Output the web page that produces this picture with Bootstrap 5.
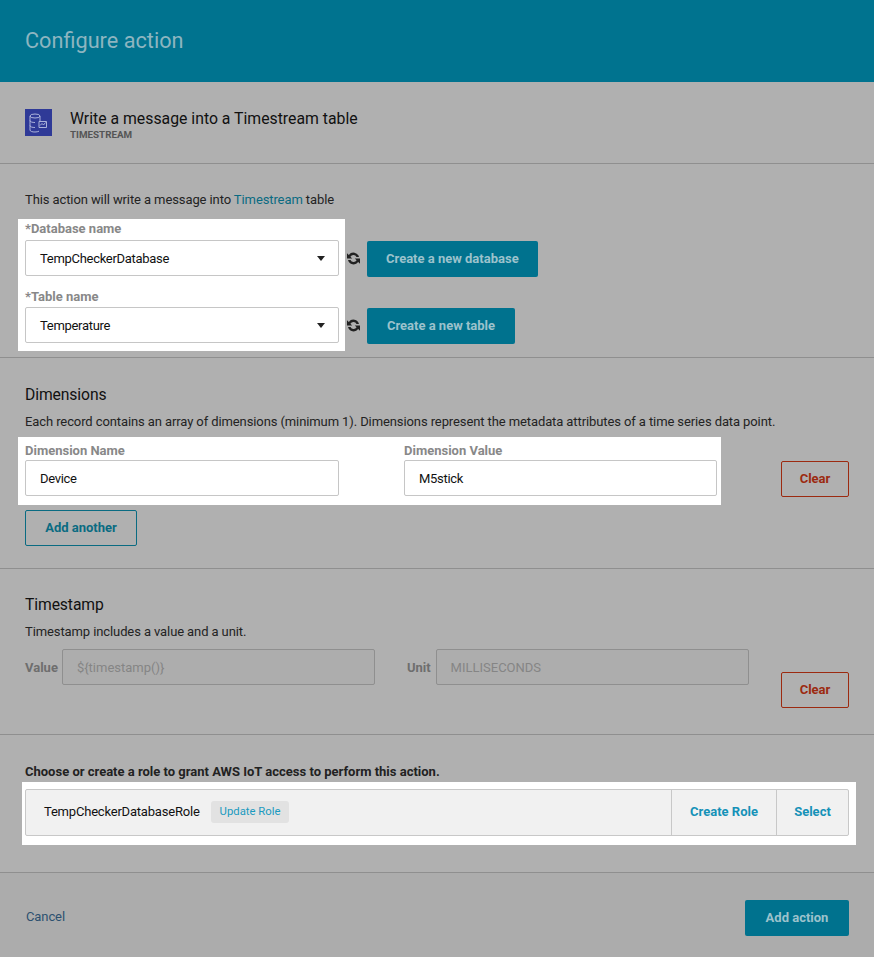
<!DOCTYPE html>
<html lang="en"><head><meta charset="utf-8"><title>Configure action</title>
<link rel="stylesheet" href="https://cdn.jsdelivr.net/npm/bootstrap@5.3.0/dist/css/bootstrap.min.css">
<style>
body{background:#b0b0b0;font-family:Roboto,"Liberation Sans",sans-serif;font-size:13px;line-height:18px;color:#232323;width:874px;height:957px;overflow:hidden;letter-spacing:-.1px}
.hdr{background:#00738f;height:82px;padding:0 25px;display:flex;align-items:center;font-size:21.7px;color:#8db5c0;letter-spacing:0}
.sect{border-bottom:1px solid #8f8f8f;padding:0 25px}
.s1{height:82px;display:flex;padding-top:27px;gap:18px}
.s2{height:194px;padding-top:27px}
.s3{height:211px;padding-top:27px}
.s4{height:166px;padding-top:26px}
.s5{height:138px;padding-top:28px}
.ftr{background:#acacac;height:84px;padding:27px 25px 0;display:flex;justify-content:space-between}
.ttl{font-size:15.8px;line-height:20px;color:#111;letter-spacing:0}
.subt{font-size:9.8px;line-height:12px;font-weight:700;color:#555;letter-spacing:0}
.ico{width:27px;height:27px;flex:none}
.tlnk{color:#0a6b82;text-decoration:none}
.hl{background:#fff;margin:0 -7px;padding:0 7px}
.hl1{width:327px;padding-top:1px;padding-bottom:8px;margin-top:10px}
.fld{color:#888;font-weight:700;line-height:18px;letter-spacing:0}
.inp{height:36px;width:314px;background:#fff;border:1px solid #c6c6c6;border-radius:2px;padding:1px 14px 0;display:flex;align-items:center;justify-content:space-between;color:#111;letter-spacing:-.3px}
.inpn{width:313px}
.caret{width:0;height:0;border:4.5px solid transparent;border-top:5px solid #222;border-bottom:0;margin-right:-1px;margin-top:-1px}
.rcol{position:absolute;left:322px;display:flex;align-items:center;gap:7px;height:36px}
.filled{background:#00728e;color:#9cc2cc;font-weight:700;border-radius:2px;height:36px;padding:0 19px;display:inline-flex;align-items:center;border:0;font-size:13px;letter-spacing:0}
.wide{width:148px;justify-content:center;padding:0}
.s2box{position:relative}
.hd2{font-size:15.7px;line-height:20px;color:#111}
.desc{margin-top:8px}
.hl2{display:flex;gap:65px;width:703px;height:68px;margin-top:6px;padding-top:5px}
.dimrow{display:flex;position:relative}
.ghost{background:transparent;height:36px;border:1px solid;border-radius:2px;font-weight:700;font-size:13px;display:inline-flex;align-items:center;justify-content:center;letter-spacing:0}
.gclear{color:#9c2a10;border-color:#9c2a10;width:68px;position:absolute;right:0}
.gadd{color:#0a6b82;border-color:#0a6b82;width:112px;margin-top:5px}
.tsrow{display:flex;position:relative;margin-top:8px;height:36px;align-items:center}
.tslab{color:#6e6e6e;font-weight:700;margin-right:4px;letter-spacing:0;padding-top:1px}
.dis{height:36px;width:313px;border:1px solid #8f8f8f;border-radius:2px;padding:1px 14px 0;display:flex;align-items:center;color:#858585;background:#adadad;letter-spacing:0}
.bold2{font-weight:700;color:#222;letter-spacing:0}
.hl3{margin-top:1px;width:834px;margin-left:-3px;margin-right:0;padding:7px 7px 9px 3px;height:63px}
.rolebar{display:flex;height:47px;background:#f1f1f1;border:1px solid #c8c8c8;border-radius:2px;align-items:stretch}
.rname{flex:1;display:flex;align-items:center;padding-left:18px;gap:11px;color:#111;letter-spacing:-.2px;padding-bottom:1px}
.pill{background:#e2e2e2;color:#1a9ac0;border-radius:3px;padding:0 9px;height:22px;display:flex;align-items:center;font-size:11.3px;letter-spacing:0}
.rbtn{border-left:1px solid #c8c8c8;color:#1592b8;font-weight:700;display:flex;align-items:center;justify-content:center;letter-spacing:0;padding-bottom:1px}
.cancel{color:#2c5170;text-decoration:none;margin-top:8px;margin-left:1px;display:block}
</style></head>
<body>
<div class="hdr">Configure action</div>
<div class="sect s1">
 <svg class="ico" viewBox="0 0 27 27" fill="none" stroke="#b9c0e2" stroke-width=".9"><rect width="27" height="27" fill="#2f3a97" stroke="none"/><ellipse cx="10" cy="7" rx="5" ry="2"/><path d="M5 7V21C5 22.500 7.500 23 10 23C11.500 23 13 22.700 14 22.200M15 7V12M5 11.500C5 13 7.500 13.500 10 13.500M5 16.500C5 18 7.500 18.500 10 18.500"/><path d="M14 12.500h7.500v6H14zM15 16.500l2-2 1.500 1.500 2-2.500"/></svg>
 <div><div class="ttl">Write a message into a Timestream table</div><div class="subt">TIMESTREAM</div></div>
</div>
<div class="sect s2">
 <div>This action will write a message into <a class="tlnk" href="#">Timestream</a> table</div>
 <div class="s2box">
  <div class="hl hl1">
   <div class="fld">*Database name</div>
   <div class="inp" style="margin-top:2px"><span>TempCheckerDatabase</span><span class="caret"></span></div>
   <div class="fld" style="margin-top:12px">*Table name</div>
   <div class="inp" style="margin-top:1px"><span>Temperature</span><span class="caret"></span></div>
  </div>
  <div class="rcol" style="top:21px"><svg width="13" height="13" viewBox="1.500 1.500 13 13"><path d="M13.500 6.500A5.700 5.700 0 0 0 3.300 4.500L1.500 2.800V8h5.200L4.900 6.200A3.400 3.400 0 0 1 11 6.500zM2.500 9.500A5.700 5.700 0 0 0 12.700 11.500L14.500 13.200V8H9.300L11.100 9.800A3.400 3.400 0 0 1 5 9.500z" fill="#222"/></svg><button class="filled" style="margin-top:2px">Create a new database</button></div>
  <div class="rcol" style="top:88px"><svg width="13" height="13" viewBox="1.500 1.500 13 13"><path d="M13.500 6.500A5.700 5.700 0 0 0 3.300 4.500L1.500 2.800V8h5.200L4.900 6.200A3.400 3.400 0 0 1 11 6.500zM2.500 9.500A5.700 5.700 0 0 0 12.700 11.500L14.500 13.200V8H9.300L11.100 9.800A3.400 3.400 0 0 1 5 9.500z" fill="#222"/></svg><button class="filled wide" style="margin-top:2px">Create a new table</button></div>
 </div>
</div>
<div class="sect s3">
 <div class="hd2">Dimensions</div>
 <div class="desc">Each record contains an array of dimensions (minimum 1). Dimensions represent the metadata attributes of a time series data point.</div>
 <div class="dimrow">
  <div class="hl hl2">
   <div><div class="fld">Dimension Name</div><div class="inp">Device</div></div>
   <div><div class="fld">Dimension Value</div><div class="inp inpn">M5stick</div></div>
  </div>
  <button class="ghost gclear" style="top:30px">Clear</button>
 </div>
 <button class="ghost gadd">Add another</button>
</div>
<div class="sect s4">
 <div class="hd2">Timestamp</div>
 <div class="desc">Timestamp includes a value and a unit.</div>
 <div class="tsrow">
  <span class="tslab">Value</span><div class="dis">${timestamp()}</div>
  <span class="tslab" style="margin-left:32px;margin-right:5px">Unit</span><div class="dis">MILLISECONDS</div>
  <button class="ghost gclear" style="top:23px">Clear</button>
 </div>
</div>
<div class="sect s5">
 <div class="bold2">Choose or create a role to grant AWS IoT access to perform this action.</div>
 <div class="hl hl3">
  <div class="rolebar">
   <div class="rname">TempCheckerDatabaseRole<span class="pill">Update Role</span></div>
   <div class="rbtn" style="width:105px">Create Role</div>
   <div class="rbtn" style="width:72px">Select</div>
  </div>
 </div>
</div>
<div class="ftr">
 <a class="cancel" href="#">Cancel</a>
 <button class="filled" style="width:104px;justify-content:center;padding:0">Add action</button>
</div>
<script src="https://cdn.jsdelivr.net/npm/bootstrap@5.3.0/dist/js/bootstrap.bundle.min.js"></script>
</body></html>
